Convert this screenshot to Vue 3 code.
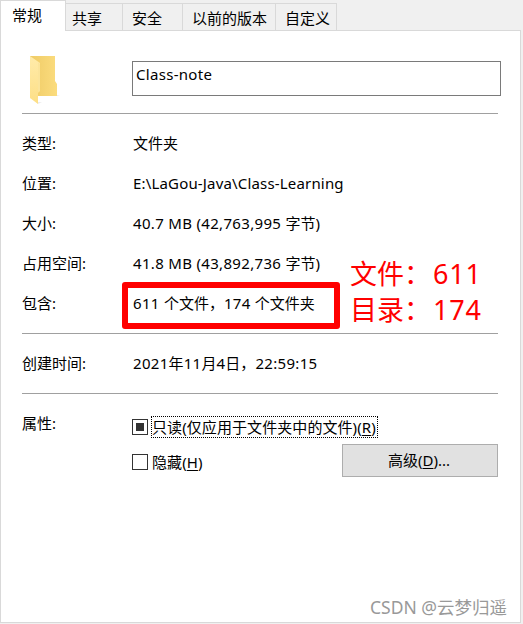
<script setup>
import { ref } from 'vue';

const tabs = ['常规', '共享', '安全', '以前的版本', '自定义'];
const activeTab = ref('常规');
const folderName = ref('Class-note');

const details = [
    { label: '类型:', value: '文件夹' },
    { label: '位置:', value: 'E:\\LaGou-Java\\Class-Learning' },
    { label: '大小:', value: '40.7 MB (42,763,995 字节)' },
    { label: '占用空间:', value: '41.8 MB (43,892,736 字节)' },
    { label: '包含:', value: '611 个文件，174 个文件夹' },
];

const notes = [
    { label: '文件：', count: 611 },
    { label: '目录：', count: 174 },
];

// Latin runs are spaced apart from the Chinese text, numbers a little wider
const split = (text) => text.match(/[\x20-\x7e]+|[^\x20-\x7e]+/g).map((part) => ({
    part,
    type: { latin: /^[A-Z]/.test(part), number: /^[\d)]/.test(part) },
}));
</script>

<template>
    <div class="dialog">
        <nav class="tabs">
            <button
                v-for="tab in tabs"
                :key="tab"
                class="tab"
                :class="{ 'tab--active': tab === activeTab, 'tab--wide': tab.length > 3 }"
                @click="activeTab = tab"
            >{{ tab }}</button>
        </nav>

        <main class="panel">
            <div class="head">
                <svg class="folder" width="36" height="50" viewBox="0 0 36 50">
                    <defs>
                        <linearGradient id="back" x1="0" x2="1">
                            <stop offset="0" stop-color="#efcb66" />
                            <stop offset="1" stop-color="#fbdc7e" />
                        </linearGradient>
                        <linearGradient id="front" x1="0" x2="0" y1="0" y2="1">
                            <stop offset="0" stop-color="#ffebaa" />
                            <stop offset="1" stop-color="#fddf86" />
                        </linearGradient>
                    </defs>
                    <path d="M7 47l5 0-4 2zM27 40h3l-3 1z" fill="#ececec" />
                    <path d="M0 1h25v25l2 3v12H0z" fill="url(#back)" />
                    <path d="M0 1l10 7v28l-2 2v11l-8-6z" fill="url(#front)" />
                    <path d="M8 7l2 2v27l-2 1z" fill="#fbe49b" />
                </svg>
                <input v-model="folderName" class="name" type="text" />
            </div>

            <hr />
            <dl class="details">
                <div v-for="row in details" :key="row.label" class="row">
                    <dt>{{ row.label }}</dt>
                    <dd><span v-for="(s, i) in split(row.value)" :key="i" :class="s.type">{{ s.part }}</span></dd>
                </div>
            </dl>

            <hr />
            <dl class="details">
                <div class="row">
                    <dt>创建时间:</dt>
                    <dd><span v-for="(s, i) in split('2021年11月4日，22:59:15')" :key="i" :class="s.type">{{ s.part }}</span></dd>
                </div>
            </dl>

            <hr />
            <div class="attributes">
                <span class="attributes-label">属性:</span>
                <div class="checks">
                    <label class="check">
                        <span class="box box--mixed"></span>
                        <span class="check-text check-text--focus">只读(仅应用于文件夹中的文件)(<u>R</u>)</span>
                    </label>
                    <label class="check">
                        <span class="box"></span>
                        <span class="check-text">隐藏(<u>H</u>)</span>
                    </label>
                </div>
                <button class="advanced">高级(<u>D</u>)...</button>
            </div>
        </main>

        <!-- anotaciones sobre el diálogo -->
        <div class="marker"></div>
        <div class="notes">
            <div v-for="note in notes" :key="note.label" class="note">
                <span>{{ note.label }}</span><span class="count">{{ note.count }}</span>
            </div>
        </div>
        <div class="watermark">CSDN @云梦归遥</div>
    </div>
</template>

<style>
body {
    margin: 0;
}
</style>

<style scoped>
.dialog {
    position: relative;
    display: flex;
    flex-direction: column;
    box-sizing: border-box;
    width: 523px;
    height: 624px;
    padding: 0 2px 1px 0;
    overflow: hidden;
    background: #f0f0f0;
    color: #000;
    font-family: "Noto Sans", "Noto Sans CJK SC", sans-serif;
    font-size: 15px;
    line-height: 20px;
}

.tabs {
    display: flex;
    align-items: flex-end;
    height: 31px;
}

.tabs::after {
    content: "";
    flex: 1;
    border-bottom: 1px solid #d9d9d9;
}

.tab {
    box-sizing: border-box;
    width: 60px;
    height: 28px;
    padding: 2px 0 0 5px;
    border: solid #d9d9d9;
    border-width: 1px 1px 1px 0;
    background: #f0f0f0;
    color: inherit;
    font: inherit;
    text-align: left;
    white-space: nowrap;
}

.tab:nth-child(2) {
    width: 57px;
    padding-left: 6px;
}

.tab:nth-child(3) {
    padding-left: 9px;
}

.tab--wide {
    width: 93px;
    padding-left: 9px;
}

.tab:last-child {
    width: 61px;
    padding-left: 9px;
}

.tab.tab--active {
    width: 66px;
    height: 31px;
    padding: 0 0 2px 11px;
    border-width: 1px 1px 0 1px;
    background: #fff;
}

.panel {
    flex: 1;
    box-sizing: border-box;
    padding: 24px 22px 0 21px;
    border: solid #d9d9d9;
    border-width: 0 1px 1px;
    background: #fff;
}

.head {
    display: flex;
    height: 58px;
}

.folder {
    flex: none;
    margin-left: 8px;
}

.name {
    box-sizing: border-box;
    width: 369px;
    height: 35px;
    margin: 6px -3px 0 66px;
    padding: 0 3px 9px;
    border: 1px solid #7a7a7a;
    border-radius: 0;
    flex: none;
    background: #fff;
    color: inherit;
    font: inherit;
    letter-spacing: 0.3px;
    outline: none;
}

hr {
    height: 1px;
    margin: 0;
    border: 0;
    background: #a0a0a0;
}

.details {
    margin: 0;
    padding: 9px 0 10px;
}

.row {
    display: flex;
    align-items: center;
    height: 40px;
}

dt {
    width: 111px;
}

dd {
    margin: 0;
    white-space: pre;
}

.latin {
    letter-spacing: 0.17px;
}

.number {
    letter-spacing: 0.32px;
}

.attributes {
    display: flex;
    position: relative;
    padding-top: 19px;
}

.attributes-label {
    width: 110px;
}

.checks {
    display: flex;
    flex-direction: column;
    gap: 13px;
    padding-top: 3px;
}

.check {
    display: flex;
    align-items: center;
    height: 22px;
}

.box {
    display: flex;
    align-items: center;
    justify-content: center;
    box-sizing: border-box;
    width: 16px;
    height: 16px;
    margin-right: 3px;
    border: 1px solid #333;
}

.box--mixed::after {
    content: "";
    width: 8px;
    height: 8px;
    background: #333;
}

.check-text {
    box-sizing: border-box;
    height: 22px;
    border: 1px solid transparent;
    letter-spacing: 0.08px;
    white-space: nowrap;
}

.check-text--focus {
    width: 227px;
    border: 1px dotted #000;
}

u {
    text-underline-offset: 2px;
}

.advanced {
    position: absolute;
    right: 0;
    top: 50px;
    box-sizing: border-box;
    width: 156px;
    height: 33px;
    padding: 0 2px 2px 0;
    border: 1px solid #adadad;
    background: #e1e1e1;
    color: inherit;
    font: inherit;
}

.marker {
    position: absolute;
    left: 122px;
    top: 282px;
    box-sizing: border-box;
    width: 218px;
    height: 47px;
    border: 6px solid #f00;
    border-radius: 3px;
}

.notes {
    position: absolute;
    left: 350px;
    top: 256px;
    color: #f00;
    font-size: 27px;
    line-height: 36px;
}

.note {
    display: flex;
    white-space: nowrap;
}

.count {
    margin-left: 2px;
    letter-spacing: 0.8px;
}

.watermark {
    position: absolute;
    left: 370px;
    top: 594px;
    color: #999;
    font-size: 17.5px;
    line-height: 26px;
    white-space: nowrap;
}
</style>
